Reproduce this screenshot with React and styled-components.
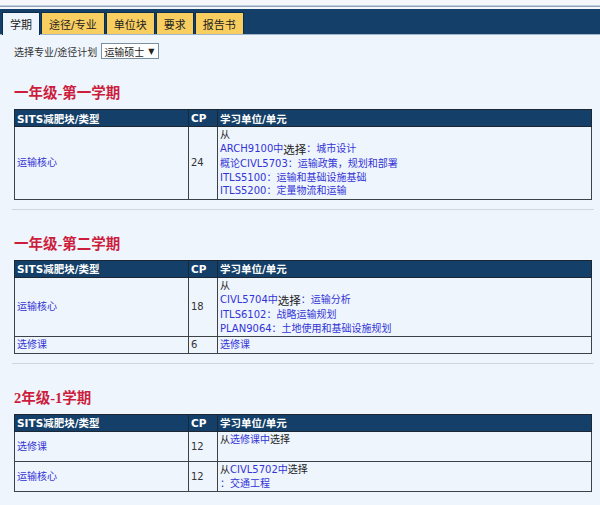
import styled, { createGlobalStyle } from "styled-components";

const GlobalStyle = createGlobalStyle`
  body {
    margin: 0;
    background: #eef5fd;
    font-family: "DejaVu Sans", "Noto Sans CJK SC", sans-serif;
    font-size: 10px;
    color: #333;
  }
`;

const Masthead = styled.div`
  background: #f5f7fa;
  padding-top: 5px;
`;

const TopRule = styled.div`
  height: 2px;
  box-sizing: border-box;
  border-top: 1px solid #c6d0da;
  border-bottom: 1px solid #8ea5bc;
  margin-bottom: 2px;
`;

const TabBar = styled.div`
  display: flex;
  gap: 1px;
  height: 26px;
  box-sizing: border-box;
  padding: 3px 0 0 2px;
  background: #133f68;
  border-bottom: 1px solid #9fb6cc;
`;

const Tab = styled.div`
  display: flex;
  align-items: center;
  height: ${(p) => (p.$active ? "23px" : "22px")};
  box-sizing: border-box;
  padding: 0 7px;
  margin-bottom: ${(p) => (p.$active ? "-1px" : "0")};
  font-size: 11px;
  color: #222;
  background: ${(p) => (p.$active ? "#eef5fd" : "#f9ce61")};
  border: 1px solid #0c2d4d;
  border-bottom: none;
`;

const Content = styled.div`
  padding: 8px 8px 20px 14px;
`;

const PlanRow = styled.div`
  display: flex;
  align-items: center;
  gap: 4px;
  font-size: 10px;
`;

const Select = styled.div`
  display: flex;
  align-items: center;
  justify-content: space-between;
  width: 58px;
  height: 16px;
  box-sizing: border-box;
  padding: 0 4px 0 2px;
  background: #fff;
  border: 1px solid #7b8fa3;
  font-size: 10px;
  color: #222;

  span {
    font-size: 8px;
  }
`;

const Heading = styled.h2`
  margin: 25px 0 7px;
  font-family: "Liberation Serif", "Noto Sans CJK SC", serif;
  font-size: 14.5px;
  line-height: 18px;
  font-weight: bold;
  color: #cd1d3d;
`;

const Table = styled.table`
  width: 100%;
  table-layout: fixed;
  border-collapse: collapse;
`;

const HeadCell = styled.th`
  height: 16px;
  padding: 0 2px;
  background: #133f68;
  color: #fff;
  font-size: 10.5px;
  font-weight: bold;
  text-align: left;
  border: 1px solid #1d2733;
`;

const Cell = styled.td`
  padding: 1px 2px;
  line-height: 13.6px;
  vertical-align: middle;
  border: 1px solid #3c4248;
  border-left-color: ${(p) => (p.$soft ? "#5d6168" : "#3c4248")};
`;

const Link = styled.a`
  color: #3434d6;
  text-decoration: none;
`;

const Plain = styled.span`
  color: #222;
  font-size: ${(p) => (p.$big ? "11.5px" : "10px")};
  vertical-align: ${(p) => (p.$big ? "-2px" : "baseline")};
`;

const Rule = styled.hr`
  margin: 9px -2px 0;
  border: 0;
  border-top: 1px solid #cfd7da;
`;

const tabs = ["学期", "途径/专业", "单位块", "要求", "报告书"];

// segments: ["t", text] plain, ["b", text] plain and lowered, ["l", text] link
const sections = [
  {
    title: "一年级-第一学期",
    rows: [
      {
        type: "运输核心",
        cp: "24",
        lines: [
          [["t", "从"]],
          [["l", "ARCH9100中"], ["b", "选择"], ["l", "：城市设计"]],
          [["l", "概论CIVL5703：运输政策，规划和部署"]],
          [["l", "ITLS5100：运输和基础设施基础"]],
          [["l", "ITLS5200：定量物流和运输"]],
        ],
      },
    ],
  },
  {
    title: "一年级-第二学期",
    rows: [
      {
        type: "运输核心",
        cp: "18",
        lines: [
          [["t", "从"]],
          [["l", "CIVL5704中"], ["b", "选择"], ["l", "：运输分析"]],
          [["l", "ITLS6102：战略运输规划"]],
          [["l", "PLAN9064：土地使用和基础设施规划"]],
        ],
      },
      { type: "选修课", cp: "6", lines: [[["l", "选修课"]]] },
    ],
  },
  {
    title: "2年级-1学期",
    rows: [
      {
        type: "选修课",
        cp: "12",
        lines: [[["t", "从"], ["l", "选修课中"], ["t", "选择"]], [["t", "\u00a0"]]],
      },
      {
        type: "运输核心",
        cp: "12",
        lines: [
          [["t", "从"], ["l", "CIVL5702中"], ["t", "选择"]],
          [["l", "：交通工程"]],
        ],
      },
    ],
  },
];

const renderSegment = ([kind, text], i) => {
  if (kind === "l") return <Link key={i}>{text}</Link>;
  return (
    <Plain key={i} $big={kind === "b"}>
      {text}
    </Plain>
  );
};

const Section = ({ section, last }) => (
  <>
    <Heading>{section.title}</Heading>
    <Table>
      <colgroup>
        <col style={{ width: 174 }} />
        <col style={{ width: 29 }} />
        <col />
      </colgroup>
      <thead>
        <tr>
          <HeadCell>SITS减肥块/类型</HeadCell>
          <HeadCell>CP</HeadCell>
          <HeadCell>学习单位/单元</HeadCell>
        </tr>
      </thead>
      <tbody>
        {section.rows.map((row, i) => (
          <tr key={i}>
            <Cell>
              <Link>{row.type}</Link>
            </Cell>
            <Cell $soft>{row.cp}</Cell>
            <Cell $soft>
              {row.lines.map((line, j) => (
                <div key={j}>{line.map(renderSegment)}</div>
              ))}
            </Cell>
          </tr>
        ))}
      </tbody>
    </Table>
    {!last && <Rule />}
  </>
);

const App = () => {
  return (
    <>
      <GlobalStyle />
      <Masthead>
        <TopRule />
        <TabBar>
          {tabs.map((t, i) => (
            <Tab key={t} $active={i === 0}>
              {t}
            </Tab>
          ))}
        </TabBar>
      </Masthead>
      <Content>
        <PlanRow>
          选择专业/途径计划
          <Select>
            运输硕士<span>▼</span>
          </Select>
        </PlanRow>
        {sections.map((s, i) => (
          <Section key={s.title} section={s} last={i === sections.length - 1} />
        ))}
      </Content>
    </>
  );
};

export default App;
